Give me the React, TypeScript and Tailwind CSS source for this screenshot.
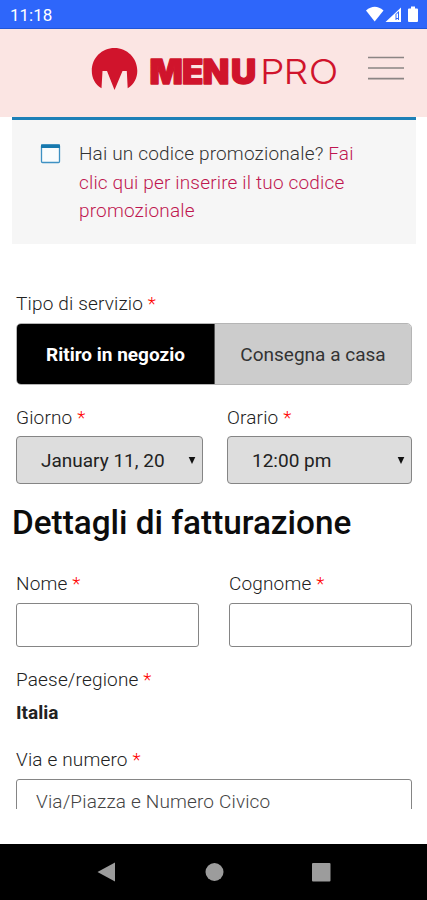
import type { ReactNode } from 'react';

function Label({ children }: { children: ReactNode }) {
  return (
    <div className="h-6 whitespace-nowrap text-[19px] font-light leading-6 tracking-[0.16px] text-[#222]">
      {children} <span className="text-[#ff0000]">*</span>
    </div>
  );
}

function StatusBar() {
  return (
    <div className="flex h-[29px] items-center justify-between border-b border-[#1f55d8] bg-[#2e66fa] pl-[10px] pr-2 text-white">
      <span className="pt-[2px] text-[17px] leading-6">11:18</span>
      <svg width="54" height="17" viewBox="0 0 54 17" className="mt-px" fill="white">
        <path d="M1 4.500Q9.700-3 18.500 4.500L9.700 15.500Z" />
        <path d="M20.500 16L36 1.500V16Z" />
        <path d="M30.500 8L34 5V14H30.500Z" fill="#2e66fa" />
        <path d="M31.500 7.500H33V12H31.500ZM31.500 13H33V14H31.500Z" />
        <path d="M43 3.500Q43 2.500 44 2.500H46V.5H50V2.500H52Q53 2.500 53 3.500V15Q53 16 52 16H44Q43 16 43 15Z" />
      </svg>
    </div>
  );
}

function Header() {
  return (
    <header className="flex h-[88px] items-start justify-between bg-[#fbe5e3] pl-[91px] pr-[23px]">
      <svg width="250" height="46" viewBox="0 0 250 46" className="mt-[17px]" fill="#d0142c" role="img" aria-label="MENUPRO">
        <path d="M10.500 42.300C4 38.500 .8 32 .8 24.800C.8 12 10.800 2 23.500 2C36 2 46.300 12 46.300 24.800C46.300 32 43 38.500 36.700 42.300L35.800 25H31.500L23.500 44L16 25H11.500Z" />
        <text transform="scale(1.04 1)" x="56.200 87.500 107.200 134.600" y="37.900" fontFamily="Inter, Roboto, sans-serif" fontWeight="900" fontSize="33.500" stroke="#d0142c" strokeWidth="1.300" strokeLinejoin="round">MENU</text>
        <text transform="scale(1.13 1)" x="149.500 170.300 192.800" y="38.300" fontFamily="Inter, Roboto, sans-serif" fontWeight="300" fontSize="34.500">PRO</text>
      </svg>
      <svg width="36" height="26" viewBox="0 0 36 26" className="mt-[26px]" stroke="#8b8584" strokeWidth="1.700">
        <path d="M0 2.500H36M0 13H36M0 23.700H36" />
      </svg>
    </header>
  );
}

function PromoNotice() {
  return (
    <section className="ml-3 mr-[11px] flex h-[127px] border-t-[3px] border-[#1d80b7] bg-[#f6f6f6] pl-7 pt-[20px]">
      <svg width="21" height="21" viewBox="0 0 21 21" className="mt-[3px] shrink-0">
        <rect x="1.500" y="2" width="18" height="17.500" rx="1" fill="#fafcfd" stroke="#3e91c3" strokeWidth="1.300" />
        <path d="M1 1.500H20V5H1Z" fill="#1779ae" />
      </svg>
      <p className="ml-[18px] whitespace-nowrap text-[19px] font-light leading-[28.500px] tracking-[0.17px] text-[#333]">
        Hai un codice promozionale? <a className="text-[#bf1650]">Fai<br />clic qui per inserire il tuo codice<br />promozionale</a>
      </p>
    </section>
  );
}

function Select({ value }: { value: string }) {
  return (
    <div className="mt-[6px] flex h-12 items-center justify-between rounded-[4px] border border-[#858585] bg-[#ddd] pl-6 pr-[6px] text-[19px] text-[#222]">
      <span className="whitespace-nowrap pt-0.5">{value}</span>
      <svg width="8" height="9" viewBox="0 0 8 9"><path d="M.7 1H7.300L4 8Z" fill="#111" /></svg>
    </div>
  );
}

export default function App() {
  return (
    <div className="flex h-[900px] w-[427px] flex-col overflow-hidden bg-white font-['Roboto',sans-serif]">
      <StatusBar />
      <Header />
      <main className="h-[692px] shrink-0 overflow-hidden">
        <PromoNotice />
        <div className="ml-4 mr-[15px] pt-12">
          <Label>Tipo di servizio</Label>
          <div className="mt-[7px] grid h-[62px] grid-cols-[197px_1fr] overflow-hidden rounded-[5px] border border-[#b5b5b5] text-[19px]">
            <button className="bg-black pt-0.5 font-bold text-white">Ritiro in negozio</button>
            <button className="border-l border-[#555] bg-[#ccc] pt-0.5 text-[#333]">Consegna a casa</button>
          </div>
          <div className="mt-[21px] grid grid-cols-[187px_185px] gap-6">
            <div>
              <Label>Giorno</Label>
              <Select value="January 11, 20" />
            </div>
            <div>
              <Label>Orario</Label>
              <Select value="12:00 pm" />
            </div>
          </div>
        </div>
        <h2 className="ml-3 mt-[19px] h-10 whitespace-nowrap text-[33.300px] font-medium leading-10 text-[#0c0c0c]">Dettagli di fatturazione</h2>
        <div className="ml-4 mr-[15px] pt-[29px]">
          <div className="grid grid-cols-[183px_183px] justify-between">
            <div><Label>Nome</Label><div className="mt-[7px] h-11 rounded-[3px] border border-[#858585]" /></div>
            <div><Label>Cognome</Label><div className="mt-[7px] h-11 rounded-[3px] border border-[#858585]" /></div>
          </div>
          <div className="mt-[21px]">
            <Label>Paese/regione</Label>
            <div className="mt-[9px] h-6 text-[19px] font-bold leading-6 text-[#222]">Italia</div>
          </div>
          <div className="mt-[23px]">
            <Label>Via e numero</Label>
            <div className="mt-[7px] h-11 rounded-[3px] border border-[#858585] pl-[19px] text-[19px] font-light leading-[43px] tracking-[0.16px] text-[#444]">Via/Piazza e Numero Civico</div>
          </div>
        </div>
      </main>
      <nav className="mt-auto flex h-14 shrink-0 items-center justify-center bg-black">
        <svg width="240" height="24" viewBox="0 0 240 24" fill="#9c9c9c">
          <path d="M3.500 12L21 2.500V21.500Z" />
          <circle cx="120.500" cy="12" r="9" />
          <rect x="218" y="3" width="18.500" height="18.500" rx="1" />
        </svg>
      </nav>
    </div>
  );
}
